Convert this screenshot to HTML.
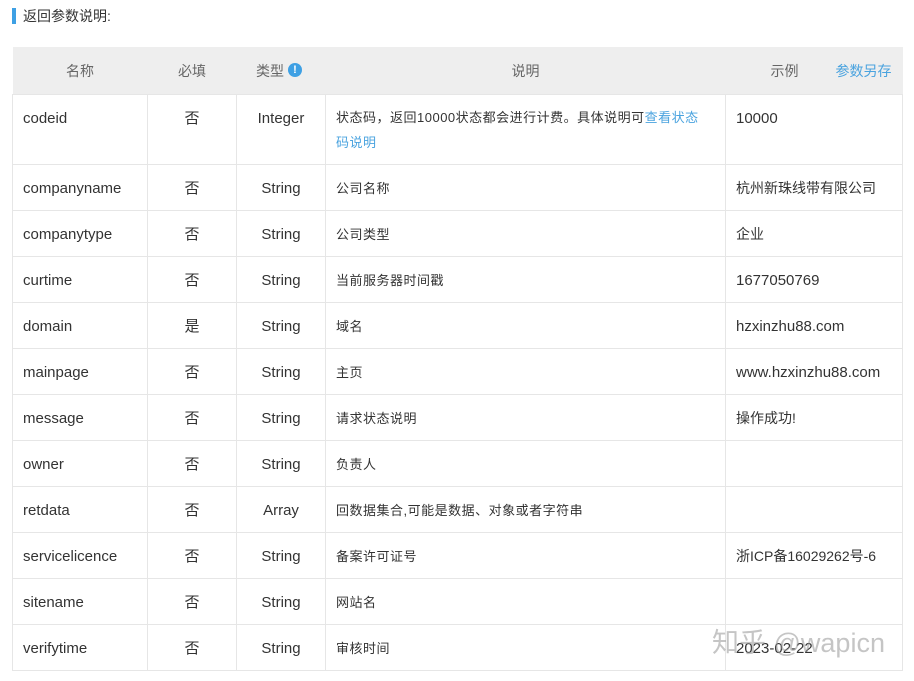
<!DOCTYPE html>
<html><head><meta charset="utf-8"><style>
body{margin:0;background:#fff;font-family:"Liberation Sans","Noto Sans CJK SC",sans-serif;color:#333;font-size:14px;width:914px;height:681px;overflow:hidden;position:relative}
.title{position:absolute;left:12px;top:8px;height:16px;border-left:4px solid #3ea0e4;padding-left:7px;font-size:14px;line-height:16px;color:#333}
table{position:absolute;left:12px;top:47px;border-collapse:collapse;width:890px;table-layout:fixed}
th{background:#eeeeee;height:47px;font-weight:normal;color:#666;font-size:14px;padding:0;border:none}
td{border:1px solid #e6e6e6;height:43px;padding:2px 10px 0;vertical-align:top;line-height:43px;font-size:15px;overflow:hidden}
td.c{text-align:center}
td.d{font-size:13px;letter-spacing:0.5px}
tr.first td{height:67px}
tr.first td.d{line-height:25px;padding-top:10px;height:59px}
a{color:#4aa3df;text-decoration:none}
.ic{display:inline-block;width:14px;height:14px;border-radius:50%;background:#3ea0e4;color:#fff;font-size:11px;line-height:14px;text-align:center;font-weight:bold;vertical-align:3px;margin-left:4px}
.wm{position:absolute;left:712px;top:621px;font-size:27px;color:rgba(150,150,150,.55)}
</style></head><body>
<div class="title">返回参数说明:</div>
<table>
<colgroup><col style="width:135px"><col style="width:89px"><col style="width:89px"><col style="width:400px"><col style="width:177px"></colgroup>
<tr><th>名称</th><th>必填</th><th style="padding-right:4px">类型<span class="ic">!</span></th><th>说明</th><th style="text-align:left;padding-left:45px">示例<a style="margin-left:37px">参数另存</a></th></tr>
<tr class="first"><td>codeid</td><td class="c">否</td><td class="c">Integer</td><td class="d">状态码，返回10000状态都会进行计费。具体说明可<a>查看状态<br>码说明</a></td><td>10000</td></tr>
<tr><td>companyname</td><td class="c">否</td><td class="c">String</td><td class="d">公司名称</td><td style="font-size:14px">杭州新珠线带有限公司</td></tr>
<tr><td>companytype</td><td class="c">否</td><td class="c">String</td><td class="d">公司类型</td><td style="font-size:14px">企业</td></tr>
<tr><td>curtime</td><td class="c">否</td><td class="c">String</td><td class="d">当前服务器时间戳</td><td>1677050769</td></tr>
<tr><td>domain</td><td class="c">是</td><td class="c">String</td><td class="d">域名</td><td>hzxinzhu88.com</td></tr>
<tr><td>mainpage</td><td class="c">否</td><td class="c">String</td><td class="d">主页</td><td>www.hzxinzhu88.com</td></tr>
<tr><td>message</td><td class="c">否</td><td class="c">String</td><td class="d">请求状态说明</td><td style="font-size:14px">操作成功!</td></tr>
<tr><td>owner</td><td class="c">否</td><td class="c">String</td><td class="d">负责人</td><td></td></tr>
<tr><td>retdata</td><td class="c">否</td><td class="c">Array</td><td class="d">回数据集合,可能是数据、对象或者字符串</td><td></td></tr>
<tr><td>servicelicence</td><td class="c">否</td><td class="c">String</td><td class="d">备案许可证号</td><td style="font-size:14px">浙ICP备16029262号-6</td></tr>
<tr><td>sitename</td><td class="c">否</td><td class="c">String</td><td class="d">网站名</td><td></td></tr>
<tr><td>verifytime</td><td class="c">否</td><td class="c">String</td><td class="d">审核时间</td><td>2023-02-22</td></tr>
</table>
<div class="wm">知乎 @wapicn</div>
</body></html>
